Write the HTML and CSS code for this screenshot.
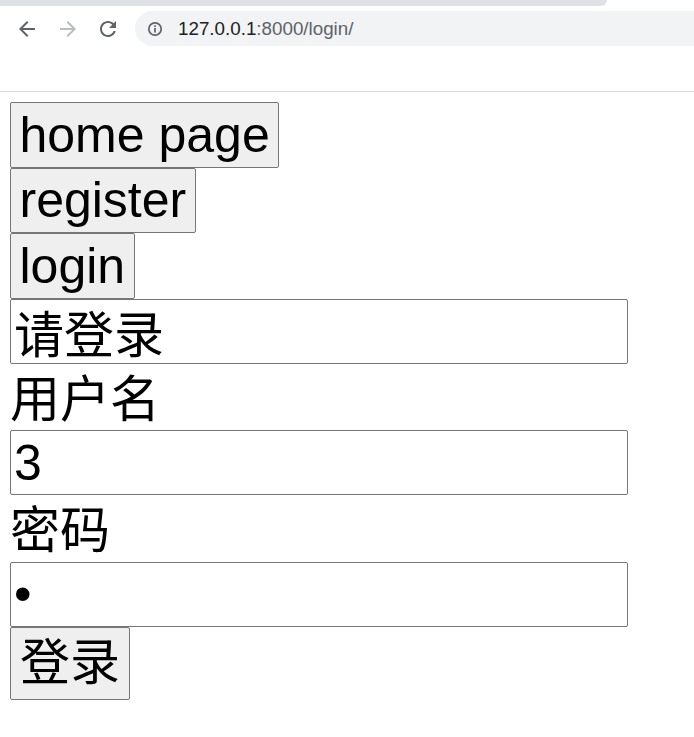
FILE: index.html
```html
<!DOCTYPE html>
<html lang="zh-CN">
<head>
<meta charset="utf-8">
<title>login</title>
<link rel="stylesheet" href="styles.css">
</head>
<body>
<header class="chrome">
  <div class="tabstrip"><div class="tabstrip-shade"></div></div>
  <div class="toolbar">
    <div class="toolbar-row">
      <span class="nav-icon">
        <svg viewBox="0 0 24 24" width="24" height="24"><path fill="#5f6368" d="M20 11H7.83l5.59-5.59L12 4l-8 8 8 8 1.41-1.41L7.83 13H20v-2z"/></svg>
      </span>
      <span class="nav-icon">
        <svg viewBox="0 0 24 24" width="24" height="24"><path fill="#babcbe" d="M12 4l-1.41 1.41L16.17 11H4v2h12.17l-5.58 5.59L12 20l8-8z"/></svg>
      </span>
      <span class="nav-icon">
        <svg viewBox="0 0 24 24" width="24" height="24"><path fill="#5f6368" d="M17.65 6.35C16.2 4.9 14.21 4 12 4c-4.42 0-7.99 3.58-7.99 8s3.57 8 7.99 8c3.73 0 6.84-2.55 7.73-6h-2.08c-.82 2.33-3.04 4-5.65 4-3.31 0-6-2.69-6-6s2.69-6 6-6c1.66 0 3.14.69 4.22 1.78L13 11h7V4l-2.35 2.35z"/></svg>
      </span>
      <div class="omnibox">
        <svg class="info-icon" viewBox="0 0 16 16" width="16" height="16">
          <circle cx="8" cy="8" r="6.2" fill="none" stroke="#5f6368" stroke-width="1.7"/>
          <rect x="7.15" y="7" width="1.7" height="4.6" fill="#5f6368"/>
          <rect x="7.15" y="4.3" width="1.7" height="1.7" fill="#5f6368"/>
        </svg>
        <span class="url"><span class="url-host">127.0.0.1</span><span class="url-rest">:8000/login/</span></span>
      </div>
    </div>
  </div>
</header>
<main class="page">
  <button class="nav-btn" type="button">home page</button>
  <button class="nav-btn" type="button">register</button>
  <button class="nav-btn" type="button">login</button>
  <form class="login-form">
    <input class="field" type="text" value="请登录">
    <div class="label">用户名</div>
    <input class="field" type="text" value="3">
    <div class="label">密码</div>
    <input class="field" type="password" value="x">
    <button class="submit-btn" type="button">登录</button>
  </form>
</main>
</body>
</html>
```
FILE: styles.css
```css
html, body {
  margin: 0;
  padding: 0;
  background: #ffffff;
}

body {
  font-family: "Liberation Sans", "Noto Sans CJK SC", sans-serif;
}

.chrome {
  display: flex;
  flex-direction: column;
}

.tabstrip {
  height: 6px;
  background: #ffffff;
}

.tabstrip-shade {
  width: 607px;
  height: 6px;
  background: #dee1e6;
  border-bottom-right-radius: 8px;
}

.toolbar {
  height: 86px;
  box-sizing: border-box;
  padding-top: 5px;
  border-bottom: 1px solid #dadce0;
}

.toolbar-row {
  display: flex;
  align-items: center;
  height: 35px;
  padding-left: 15px;
}

.nav-icon {
  width: 24px;
  height: 24px;
  display: flex;
  margin-right: 16.5px;
}

.nav-icon:nth-child(3) {
  margin-right: 15px;
}

.omnibox {
  flex: 1;
  height: 35px;
  background: #f1f3f4;
  border-radius: 17.5px 0 0 17.5px;
  display: flex;
  align-items: center;
  padding-left: 12px;
}

.info-icon {
  flex: none;
  margin-right: 15px;
}

.url {
  font-family: "Liberation Sans", sans-serif;
  font-size: 18.8px;
  white-space: nowrap;
}

.url-host {
  color: #202124;
}

.url-rest {
  color: #5f6368;
}

.page {
  display: flex;
  flex-direction: column;
  align-items: flex-start;
  padding: 10px 10px 0 10px;
}

.nav-btn,
.submit-btn {
  font-family: "Liberation Sans", "Noto Sans CJK SC", sans-serif;
  font-size: 50px;
  color: #000000;
  background: #efefef;
  border: 1px solid #767676;
  border-radius: 2px;
  box-sizing: border-box;
  margin: 0;
  display: flex;
  align-items: center;
  justify-content: center;
}

.nav-btn {
  height: 65.5px;
  padding: 0 8.5px;
  line-height: 1;
}

.login-form {
  display: flex;
  flex-direction: column;
  align-items: flex-start;
  margin: 0;
}

.field {
  font-family: "Liberation Sans", "Noto Sans CJK SC", sans-serif;
  font-size: 50px;
  color: #000000;
  width: 618px;
  height: 65px;
  box-sizing: border-box;
  border: 1px solid #767676;
  border-radius: 2px;
  padding: 0 3px;
  margin: 0;
  background: #ffffff;
  outline: none;
}

.label {
  font-size: 50px;
  height: 66.5px;
  box-sizing: border-box;
  padding-top: 6px;
  line-height: 60.5px;
  color: #000000;
  font-family: "Liberation Sans", "Noto Sans CJK SC", sans-serif;
}

.submit-btn {
  height: 73.5px;
  padding: 0 9px;
  line-height: 1;
}
```
